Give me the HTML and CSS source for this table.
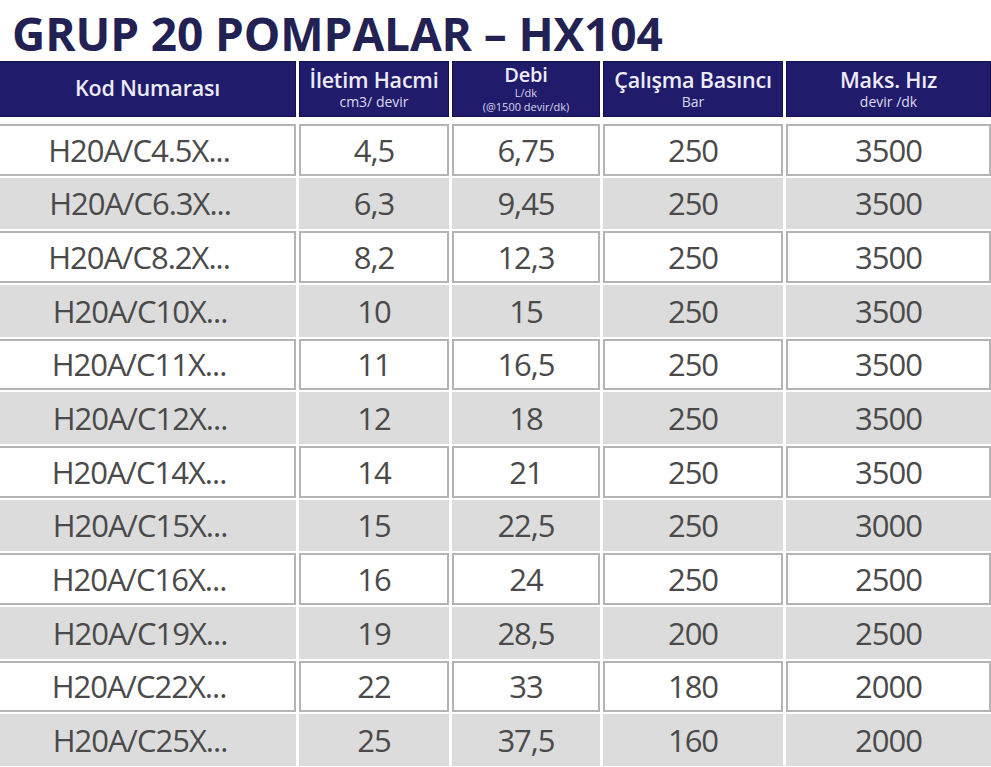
FILE: index.html
```html
<!DOCTYPE html>
<html lang="tr">
<head>
<meta charset="utf-8">
<title>Grup 20 Pompalar – HX104</title>
<link rel="stylesheet" href="styles.css">
</head>
<body>
<div class="page">
  <h1 class="title">GRUP 20 POMPALAR – HX104</h1>
  <div class="head">
    <div class="hcell hcell-single"><span class="hmain">Kod Numarası</span></div>
    <div class="hcell"><span class="hmain">İletim Hacmi</span><span class="hsub">cm3/ devir</span></div>
    <div class="hcell hcell-debi"><span class="hmain">Debi</span><span class="hsmall">L/dk</span><span class="hsmall">(@1500 devir/dk)</span></div>
    <div class="hcell"><span class="hmain">Çalışma Basıncı</span><span class="hsub">Bar</span></div>
    <div class="hcell"><span class="hmain">Maks. Hız</span><span class="hsub">devir /dk</span></div>
  </div>
  <div class="rows">
    <div class="row row-white"><div class="cell">H20A/C4.5X...</div><div class="cell">4,5</div><div class="cell">6,75</div><div class="cell">250</div><div class="cell">3500</div></div>
    <div class="row row-grey"><div class="cell">H20A/C6.3X...</div><div class="cell">6,3</div><div class="cell">9,45</div><div class="cell">250</div><div class="cell">3500</div></div>
    <div class="row row-white"><div class="cell">H20A/C8.2X...</div><div class="cell">8,2</div><div class="cell">12,3</div><div class="cell">250</div><div class="cell">3500</div></div>
    <div class="row row-grey"><div class="cell">H20A/C10X...</div><div class="cell">10</div><div class="cell">15</div><div class="cell">250</div><div class="cell">3500</div></div>
    <div class="row row-white"><div class="cell">H20A/C11X...</div><div class="cell">11</div><div class="cell">16,5</div><div class="cell">250</div><div class="cell">3500</div></div>
    <div class="row row-grey"><div class="cell">H20A/C12X...</div><div class="cell">12</div><div class="cell">18</div><div class="cell">250</div><div class="cell">3500</div></div>
    <div class="row row-white"><div class="cell">H20A/C14X...</div><div class="cell">14</div><div class="cell">21</div><div class="cell">250</div><div class="cell">3500</div></div>
    <div class="row row-grey"><div class="cell">H20A/C15X...</div><div class="cell">15</div><div class="cell">22,5</div><div class="cell">250</div><div class="cell">3000</div></div>
    <div class="row row-white"><div class="cell">H20A/C16X...</div><div class="cell">16</div><div class="cell">24</div><div class="cell">250</div><div class="cell">2500</div></div>
    <div class="row row-grey"><div class="cell">H20A/C19X...</div><div class="cell">19</div><div class="cell">28,5</div><div class="cell">200</div><div class="cell">2500</div></div>
    <div class="row row-white"><div class="cell">H20A/C22X...</div><div class="cell">22</div><div class="cell">33</div><div class="cell">180</div><div class="cell">2000</div></div>
    <div class="row row-grey"><div class="cell">H20A/C25X...</div><div class="cell">25</div><div class="cell">37,5</div><div class="cell">160</div><div class="cell">2000</div></div>
  </div>
</div>
</body>
</html>
```
FILE: styles.css
```css
* { box-sizing: border-box; }
html, body { margin: 0; padding: 0; background: #ffffff; }
body { font-family: "Open Sans", "Noto Sans", sans-serif; }

.page {
  width: 991px;
  height: 767px;
  overflow: hidden;
  display: flex;
  flex-direction: column;
}

.title {
  margin: 0;
  height: 61px;
  padding: 7px 0 0 12px;
  font-size: 46px;
  line-height: 52px;
  font-weight: 700;
  color: #222153;
  letter-spacing: -0.1px;
  white-space: nowrap;
}

.head {
  display: grid;
  grid-template-columns: 296px 150px 148px 180px 1fr;
  column-gap: 3px;
  height: 56px;
}

.hcell {
  background: #201b6a;
  border: 1px solid #14114a;
  color: #ecebf7;
  display: flex;
  flex-direction: column;
  align-items: center;
  justify-content: center;
  text-align: center;
  padding-bottom: 2px;
}
.hcell:first-child { border-left: none; }

.hmain {
  font-size: 21.5px;
  font-weight: 600;
  line-height: 26px;
  letter-spacing: -0.2px;
  white-space: nowrap;
}
.hsub {
  font-size: 14px;
  line-height: 17px;
  color: #dcdaf0;
}
.hsmall {
  font-size: 11px;
  line-height: 14px;
  color: #d6d4ee;
  white-space: nowrap;
}
.hcell-debi { padding-bottom: 1px; }
.hcell-debi .hmain { font-size: 20px; line-height: 23px; }

.rows {
  margin-top: 6px;
  flex: 1;
  display: grid;
  grid-template-rows: repeat(12, 1fr);
}

.row {
  display: grid;
  grid-template-columns: 296px 150px 148px 180px 1fr;
  column-gap: 3px;
}

.cell {
  display: flex;
  align-items: center;
  justify-content: center;
  font-size: 31px;
  letter-spacing: -1px;
  color: #4a4a4a;
  white-space: nowrap;
}
.row .cell:first-child { padding-right: 16px; }

.row-white .cell {
  background: #ffffff;
  border: 2px solid #b4b4b4;
  margin: 1px 0;
}
.row-white .cell:first-child { border-left: none; }

.row-grey .cell {
  background: #dcdcdc;
  margin: 1px 0;
}
```
